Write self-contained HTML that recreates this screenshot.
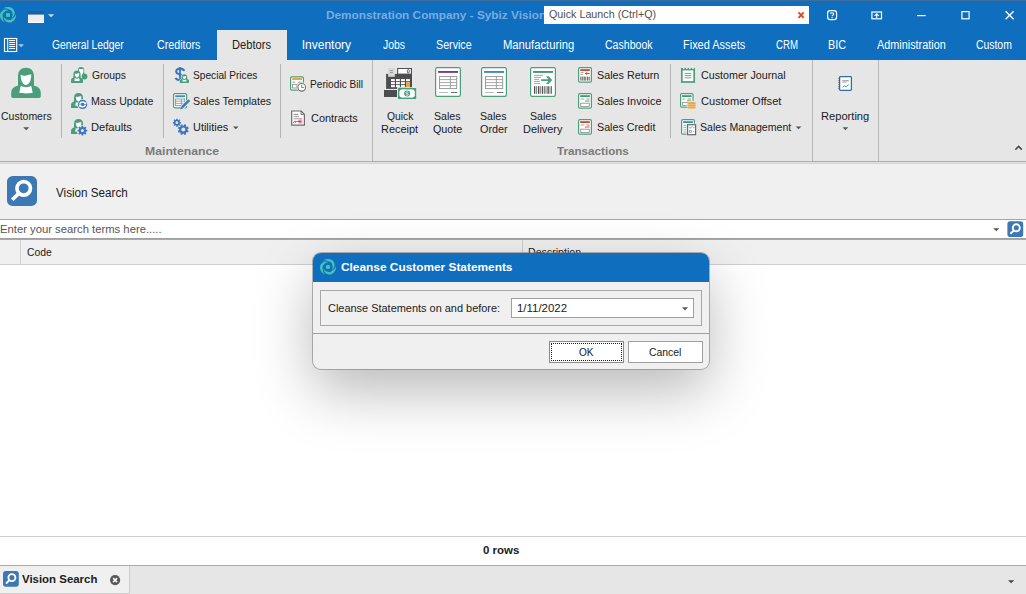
<!DOCTYPE html>
<html lang="en">
<head>
<meta charset="utf-8">
<title>Sybiz Vision - Cleanse Customer Statements</title>
<style>
html,body{margin:0;padding:0;}
body{width:1026px;height:594px;overflow:hidden;position:relative;background:#fff;font-family:"Liberation Sans",sans-serif;font-size:12px;}
.a{position:absolute;}
.t{position:absolute;white-space:nowrap;line-height:1;transform-origin:0 0;font-size:12px;}
svg{position:absolute;overflow:visible;}
.vs{position:absolute;width:1px;top:64px;height:74px;background:#b4b4b4;}
.gs{position:absolute;width:1px;top:60px;height:101px;background:#bababa;}
</style>
</head>
<body>
<!-- title bar + tab row -->
<div class="a" style="left:0;top:0;width:1026px;height:60px;background:#106ebe;"></div>
<div class="a" style="left:0;top:0;width:1026px;height:1px;background:#3d6d9c;"></div>
<!-- active tab -->
<div class="a" style="left:217px;top:30px;width:70px;height:30px;background:#e6e6e6;"></div>
<!-- ribbon -->
<div class="a" style="left:0;top:60px;width:1026px;height:101px;background:#e6e6e6;"></div>
<div class="a" style="left:0;top:161px;width:1026px;height:1px;background:#ababab;"></div>
<div class="a" style="left:0;top:162px;width:1026px;height:1px;background:#e2e2e2;"></div>
<div class="a" style="left:0;top:163px;width:1026px;height:1px;background:#d3d3d3;"></div>
<!-- content bg -->
<div class="a" style="left:0;top:164px;width:1026px;height:55px;background:#f0f0f0;"></div>
<!-- search input -->
<div class="a" style="left:0;top:219px;width:1026px;height:20px;background:#fff;border-top:1px solid #a6a6a6;border-bottom:1px solid #a0a0a0;box-sizing:border-box;"></div>
<div class="a" style="left:0;top:239px;width:1026px;height:1px;background:#a8a8a8;"></div>
<!-- grid header -->
<div class="a" style="left:0;top:240px;width:1026px;height:24px;background:#f0f0f0;"></div>
<div class="a" style="left:0;top:264px;width:1026px;height:1px;background:#cfcfcf;"></div>
<div class="a" style="left:20px;top:240px;width:1px;height:24px;background:#cfcfcf;"></div>
<div class="a" style="left:522px;top:240px;width:1px;height:24px;background:#cfcfcf;"></div>
<!-- footer -->
<div class="a" style="left:0;top:536px;width:1026px;height:1px;background:#cdcdcd;"></div>
<!-- bottom tab bar -->
<div class="a" style="left:0;top:565px;width:1026px;height:29px;background:#e6e6e6;"></div>
<div class="a" style="left:0;top:565px;width:1026px;height:1px;background:#ababab;"></div>
<div class="a" style="left:0;top:566px;width:129px;height:27px;background:#f0f0f0;border-right:1px solid #cecece;border-bottom:1px solid #cecece;"></div>

<!-- ribbon separators -->
<div class="vs" style="left:61px;"></div>
<div class="vs" style="left:163px;"></div>
<div class="vs" style="left:280px;"></div>
<div class="vs" style="left:670px;"></div>
<div class="gs" style="left:372px;"></div>
<div class="gs" style="left:812px;"></div>
<div class="gs" style="left:878px;"></div>

<span class="t" style="left:325.53px;top:9.99px;transform:scaleX(1.0735);color:#7AABE2;font-size:11px;font-weight:700;">Demonstration Company - Sybiz Vision</span>
<!-- quick launch -->
<div class="a" style="left:544px;top:6px;width:265px;height:18px;background:#fff;"></div>
<span class="t" style="left:548.90px;top:9.39px;transform:scaleX(0.9761);color:#505050;font-size:11px;">Quick Launch (Ctrl+Q)</span>
<span class="t" style="left:52.00px;top:39.44px;transform:scaleX(0.8601);color:#ffffff;">General Ledger</span>
<span class="t" style="left:157.00px;top:39.44px;transform:scaleX(0.8929);color:#ffffff;">Creditors</span>
<span class="t" style="left:231.57px;top:39.44px;transform:scaleX(0.9268);color:#202020;">Debtors</span>
<span class="t" style="left:301.75px;top:39.44px;transform:scaleX(1.0000);color:#ffffff;">Inventory</span>
<span class="t" style="left:383.10px;top:39.44px;transform:scaleX(0.8660);color:#ffffff;">Jobs</span>
<span class="t" style="left:435.86px;top:39.44px;transform:scaleX(0.8910);color:#ffffff;">Service</span>
<span class="t" style="left:502.81px;top:39.44px;transform:scaleX(0.9358);color:#ffffff;">Manufacturing</span>
<span class="t" style="left:604.50px;top:39.44px;transform:scaleX(0.8796);color:#ffffff;">Cashbook</span>
<span class="t" style="left:682.84px;top:39.44px;transform:scaleX(0.9142);color:#ffffff;">Fixed Assets</span>
<span class="t" style="left:776.25px;top:39.44px;transform:scaleX(0.8056);color:#ffffff;">CRM</span>
<span class="t" style="left:827.85px;top:39.44px;transform:scaleX(0.9028);color:#ffffff;">BIC</span>
<span class="t" style="left:876.80px;top:39.44px;transform:scaleX(0.9040);color:#ffffff;">Administration</span>
<span class="t" style="left:976.25px;top:39.44px;transform:scaleX(0.8659);color:#ffffff;">Custom</span>
<span class="t" style="left:0.75px;top:111.49px;transform:scaleX(0.9528);color:#202020;font-size:11px;">Customers</span>
<span class="t" style="left:91.75px;top:69.69px;transform:scaleX(0.9375);color:#202020;font-size:11px;">Groups</span>
<span class="t" style="left:90.79px;top:95.69px;transform:scaleX(0.9609);color:#202020;font-size:11px;">Mass Update</span>
<span class="t" style="left:90.74px;top:121.69px;transform:scaleX(1.0128);color:#202020;font-size:11px;">Defaults</span>
<span class="t" style="left:192.83px;top:69.69px;transform:scaleX(0.9239);color:#202020;font-size:11px;">Special Prices</span>
<span class="t" style="left:192.78px;top:95.69px;transform:scaleX(0.9715);color:#202020;font-size:11px;">Sales Templates</span>
<span class="t" style="left:192.76px;top:121.69px;transform:scaleX(0.9926);color:#202020;font-size:11px;">Utilities</span>
<span class="t" style="left:309.83px;top:78.69px;transform:scaleX(0.9241);color:#202020;font-size:11px;">Periodic Bill</span>
<span class="t" style="left:310.75px;top:112.69px;transform:scaleX(0.9947);color:#202020;font-size:11px;">Contracts</span>
<span class="t" style="left:386.50px;top:111.49px;transform:scaleX(0.9393);color:#202020;font-size:11px;">Quick</span>
<span class="t" style="left:381.01px;top:124.29px;transform:scaleX(0.9917);color:#202020;font-size:11px;">Receipt</span>
<span class="t" style="left:433.53px;top:111.49px;transform:scaleX(0.9654);color:#202020;font-size:11px;">Sales</span>
<span class="t" style="left:433.00px;top:124.29px;transform:scaleX(0.9767);color:#202020;font-size:11px;">Quote</span>
<span class="t" style="left:479.79px;top:111.49px;transform:scaleX(0.9615);color:#202020;font-size:11px;">Sales</span>
<span class="t" style="left:479.50px;top:124.29px;transform:scaleX(0.9821);color:#202020;font-size:11px;">Order</span>
<span class="t" style="left:529.79px;top:111.49px;transform:scaleX(0.9615);color:#202020;font-size:11px;">Sales</span>
<span class="t" style="left:522.76px;top:124.29px;transform:scaleX(0.9936);color:#202020;font-size:11px;">Delivery</span>
<span class="t" style="left:596.52px;top:69.69px;transform:scaleX(0.9798);color:#202020;font-size:11px;">Sales Return</span>
<span class="t" style="left:596.52px;top:95.69px;transform:scaleX(0.9844);color:#202020;font-size:11px;">Sales Invoice</span>
<span class="t" style="left:596.53px;top:121.69px;transform:scaleX(0.9746);color:#202020;font-size:11px;">Sales Credit</span>
<span class="t" style="left:700.75px;top:69.69px;transform:scaleX(0.9738);color:#202020;font-size:11px;">Customer Journal</span>
<span class="t" style="left:700.75px;top:95.69px;transform:scaleX(1.0063);color:#202020;font-size:11px;">Customer Offset</span>
<span class="t" style="left:699.79px;top:121.69px;transform:scaleX(0.9628);color:#202020;font-size:11px;">Sales Management</span>
<span class="t" style="left:820.74px;top:111.49px;transform:scaleX(1.0109);color:#202020;font-size:11px;">Reporting</span>
<span class="t" style="left:144.89px;top:145.69px;transform:scaleX(1.1115);color:#7a7a7a;font-size:11px;font-weight:700;">Maintenance</span>
<span class="t" style="left:557.00px;top:145.69px;transform:scaleX(1.0588);color:#7a7a7a;font-size:11px;font-weight:700;">Transactions</span>
<span class="t" style="left:55.50px;top:187.42px;transform:scaleX(0.9329);color:#202020;font-size:12.5px;">Vision Search</span>
<span class="t" style="left:-0.22px;top:223.69px;transform:scaleX(1.0244);color:#555555;font-size:11px;">Enter your search terms here.....</span>
<span class="t" style="left:26.75px;top:246.69px;transform:scaleX(0.9423);color:#202020;font-size:11px;">Code</span>
<span class="t" style="left:527.79px;top:246.69px;transform:scaleX(0.9639);color:#202020;font-size:11px;">Description</span>
<span class="t" style="left:482.50px;top:545.19px;transform:scaleX(1.0429);color:#202020;font-size:11px;font-weight:700;">0 rows</span>
<span class="t" style="left:21.80px;top:574.29px;transform:scaleX(1.0389);color:#202020;font-size:11px;font-weight:700;">Vision Search</span>

<svg style="left:0;top:0" width="1026" height="594" viewBox="0 0 1026 594"><path fill="#43c2b4" d="M3.04 8.66 L3.65 8.23 L4.29 7.86 L4.96 7.55 L5.66 7.30 L6.37 7.12 L7.10 7.00 L7.84 6.95 L8.58 6.97 L9.31 7.06 L10.04 7.21 L10.74 7.43 L11.43 7.72 L12.08 8.06 L12.68 8.50 L13.18 9.04 L13.61 9.63 L13.96 10.27 L14.23 10.92 L14.43 11.59 L14.55 12.26 L14.60 12.93 L14.57 13.59 L14.47 14.22 L14.31 14.82 L14.10 15.39 L13.82 15.92 L13.50 16.39 L13.14 16.82 L12.75 17.19 L12.33 17.50 L11.90 17.25 L12.11 16.90 L12.29 16.52 L12.44 16.12 L12.54 15.71 L12.60 15.29 L12.61 14.87 L12.59 14.45 L12.52 14.03 L12.40 13.62 L12.24 13.23 L12.13 12.81 L12.06 12.34 L11.92 11.88 L11.73 11.43 L11.48 11.00 L11.16 10.61 L10.76 10.30 L10.32 10.07 L9.86 9.88 L9.38 9.73 L8.89 9.62 L8.41 9.28 L7.88 8.97 L7.30 8.72 L6.66 8.53 L5.99 8.40 L5.29 8.35 L4.55 8.37 L3.80 8.47 L3.04 8.66Z"/><path fill="#43c2b4" d="M15.97 13.88 L16.04 14.62 L16.04 15.36 L15.98 16.09 L15.84 16.82 L15.64 17.53 L15.38 18.22 L15.05 18.89 L14.66 19.52 L14.22 20.11 L13.73 20.66 L13.18 21.16 L12.59 21.61 L11.97 22.00 L11.29 22.30 L10.57 22.47 L9.84 22.54 L9.12 22.53 L8.42 22.44 L7.74 22.27 L7.09 22.04 L6.49 21.75 L5.94 21.39 L5.44 21.00 L5.00 20.56 L4.61 20.08 L4.30 19.59 L4.04 19.07 L3.85 18.55 L3.73 18.02 L3.67 17.50 L4.10 17.25 L4.30 17.62 L4.54 17.96 L4.81 18.28 L5.11 18.57 L5.45 18.83 L5.80 19.06 L6.18 19.25 L6.58 19.40 L6.99 19.50 L7.41 19.56 L7.83 19.67 L8.27 19.84 L8.74 19.96 L9.23 20.01 L9.72 20.01 L10.22 19.93 L10.69 19.74 L11.11 19.48 L11.51 19.17 L11.88 18.83 L12.21 18.46 L12.75 18.22 L13.28 17.91 L13.79 17.53 L14.27 17.08 L14.72 16.56 L15.12 15.97 L15.46 15.33 L15.75 14.63 L15.97 13.88Z"/><path fill="#43c2b4" d="M4.98 22.46 L4.31 22.16 L3.67 21.79 L3.07 21.36 L2.50 20.88 L1.99 20.35 L1.52 19.78 L1.11 19.16 L0.76 18.51 L0.46 17.83 L0.24 17.13 L0.07 16.41 L-0.02 15.67 L-0.05 14.93 L0.03 14.20 L0.25 13.49 L0.55 12.83 L0.92 12.21 L1.35 11.64 L1.83 11.14 L2.36 10.70 L2.91 10.32 L3.49 10.02 L4.09 9.78 L4.69 9.62 L5.29 9.53 L5.88 9.50 L6.45 9.54 L7.00 9.64 L7.52 9.79 L8.00 10.00 L8.00 10.50 L7.58 10.49 L7.17 10.52 L6.75 10.60 L6.35 10.71 L5.96 10.87 L5.58 11.07 L5.23 11.30 L4.90 11.57 L4.61 11.88 L4.34 12.21 L4.04 12.52 L3.67 12.81 L3.34 13.16 L3.04 13.55 L2.80 13.99 L2.62 14.46 L2.55 14.96 L2.57 15.46 L2.63 15.95 L2.74 16.44 L2.90 16.92 L2.84 17.50 L2.84 18.12 L2.92 18.75 L3.07 19.39 L3.29 20.04 L3.60 20.68 L3.98 21.30 L4.44 21.90 L4.98 22.46Z"/><rect x="5.95" y="12.95" width="4.1" height="4.1" rx="1.3" fill="#43c2b4"/>
<rect x="28" y="11" width="16" height="12" fill="#ececec"/>
<rect x="28" y="11" width="16" height="3.6" fill="#1d5fa6"/>
<rect x="28" y="21.5" width="16" height="1.5" fill="#fafafa"/>
<path fill="#c6dbf0" d="M48 14.2H54.2L51.1 17.3Z"/>
<rect x="4.5" y="38.5" width="12.2" height="13" fill="none" stroke="#fff" stroke-width="1.15"/>
<rect x="7.2" y="38.5" width="1" height="13" fill="#fff"/>
<rect x="9.1" y="40.05" width="6" height="1" fill="#fff"/>
<rect x="9.1" y="42.05" width="6" height="1" fill="#fff"/>
<rect x="9.1" y="44.05" width="6" height="1" fill="#fff"/>
<rect x="9.1" y="46.05" width="6" height="1" fill="#fff"/>
<rect x="9.1" y="48.05" width="6" height="1" fill="#fff"/>
<path fill="#a8c8e8" d="M18.2 44.2H24L21.1 47.2Z"/>
<path d="M798.5 12.4L803.7 17.8M803.7 12.4L798.5 17.8" stroke="#e8410f" stroke-width="1.8" fill="none"/>
<rect x="827.6" y="10.7" width="9" height="9" rx="2.6" fill="none" stroke="#fff" stroke-width="1.2"/>
<path d="M830.5 13.8C830.5 12.3 833.8 12.3 833.8 14C833.8 15.1 832.1 15 832.1 16.3" stroke="#fff" stroke-width="1.1" fill="none"/><rect x="831.5" y="17.1" width="1.2" height="1.2" fill="#fff"/>
<rect x="871.9" y="12" width="9.6" height="6.8" fill="none" stroke="#fff" stroke-width="1.2"/>
<path d="M876.7 18V14.2M874.6 15.9L876.7 13.8L878.8 15.9" stroke="#fff" stroke-width="1.1" fill="none"/>
<rect x="917" y="15" width="8.6" height="1.2" fill="#fff"/>
<rect x="961.9" y="11.6" width="7.2" height="7.2" fill="none" stroke="#fff" stroke-width="1.2"/>
<path d="M1005.6 11.2L1013.6 19.2M1013.6 11.2L1005.6 19.2" stroke="#fff" stroke-width="1.4" fill="none"/>
<g transform="translate(10 67)"><path fill="#4a9f7a" d="M16 .8C11 .8 8 4.2 8 9.5V18.8C4 19.4 1.2 22 1.2 26V29C1.2 30.5 2 31 4 31H28C30 31 30.8 30.5 30.8 29V26C30.8 22 28 19.4 24 18.8V9.5C24 4.2 21 .8 16 .8Z"/><path fill="#fff" d="M10.6 7.8C12.6 9 15 9 17 8.2C19 7.5 20.5 7.3 21.3 7.6C21.3 13.5 19 18 16 18C13 18 10.6 13.5 10.6 7.8Z"/><path fill="#fff" d="M10.8 18.8C13 20.6 19 20.6 21.2 18.8L22.7 25.8C19 26.6 13 26.6 9.3 25.8Z"/></g>
<path fill="#555" d="M23.2 127.2H29.2L26.2 130.2Z"/>
<path fill="#4a9f7a" d="M78 74V69.6C78 67.7 79.3 67 81.05 67C82.8 67 84.1 67.7 84.1 69.6V74Z"/>
<path fill="#fff" d="M78.9 68.9H83.4V71.6C83.4 73.2 82.6 74.4 81.6 74.6L83 77.4H79V74.4C78.9 73.6 78.9 72 78.9 68.9Z"/>
<circle cx="84.5" cy="76.5" r="2.9" fill="#4a9f7a"/>
<path fill="#e6e6e6" d="M77 70.2C74.2 70.2 73 72 73 74.4V77C71.2 77.5 70.5 78.8 70.5 80.5V83H83.5V80.5C83.5 78.8 82.8 77.5 81 77V74.4C81 72 79.8 70.2 77 70.2Z" opacity=".0"/>
<g transform="translate(71 70.5) scale(1 0.96)"><path fill="#4a9f7a" d="M6 0C3.6 0 2.4 1.7 2.4 4V7.3C1 7.7 0 8.6 0 10.3V12.2C0 12.8 .3 13 1 13H11C11.7 13 12 12.8 12 12.2V10.3C12 8.6 11 7.7 9.6 7.3V4C9.6 1.7 8.4 0 6 0Z"/><path fill="#fff" d="M3.8 3.1C4.7 3.6 5.7 3.5 6.6 3.1C7.4 2.8 7.9 2.8 8.3 3C8.3 5.4 7.4 7.2 6 7.2C4.6 7.2 3.8 5.4 3.8 3.1Z"/><path fill="#fff" d="M3.9 7.9C5 8.7 7 8.7 8.1 7.9L8.7 10.8C7.4 11.1 4.6 11.1 3.3 10.8Z"/></g>
<g transform="translate(71 93) scale(1.25 1.16)"><path fill="#4a9f7a" d="M6 0C3.6 0 2.4 1.7 2.4 4V7.3C1 7.7 0 8.6 0 10.3V12.2C0 12.8 .3 13 1 13H11C11.7 13 12 12.8 12 12.2V10.3C12 8.6 11 7.7 9.6 7.3V4C9.6 1.7 8.4 0 6 0Z"/><path fill="#fff" d="M3.8 3.1C4.7 3.6 5.7 3.5 6.6 3.1C7.4 2.8 7.9 2.8 8.3 3C8.3 5.4 7.4 7.2 6 7.2C4.6 7.2 3.8 5.4 3.8 3.1Z"/><path fill="#fff" d="M3.9 7.9C5 8.7 7 8.7 8.1 7.9L8.7 10.8C7.4 11.1 4.6 11.1 3.3 10.8Z"/></g>
<circle cx="82.6" cy="104.4" r="5.4" fill="#e6e6e6"/><circle cx="82.6" cy="104.4" r="4.6" fill="#3a77be"/>
<path d="M79.7 103.8C80.5 101.6 84 101.4 85.2 103.3M85.5 105C84.7 107.2 81.2 107.4 80 105.5" stroke="#fff" stroke-width="1.5" fill="none"/><path fill="#fff" d="M86.3 101.6V104.3H83.6ZM78.9 107.2V104.5H81.6Z"/>
<g transform="translate(71 119) scale(1.25 1.16)"><path fill="#4a9f7a" d="M6 0C3.6 0 2.4 1.7 2.4 4V7.3C1 7.7 0 8.6 0 10.3V12.2C0 12.8 .3 13 1 13H11C11.7 13 12 12.8 12 12.2V10.3C12 8.6 11 7.7 9.6 7.3V4C9.6 1.7 8.4 0 6 0Z"/><path fill="#fff" d="M3.8 3.1C4.7 3.6 5.7 3.5 6.6 3.1C7.4 2.8 7.9 2.8 8.3 3C8.3 5.4 7.4 7.2 6 7.2C4.6 7.2 3.8 5.4 3.8 3.1Z"/><path fill="#fff" d="M3.9 7.9C5 8.7 7 8.7 8.1 7.9L8.7 10.8C7.4 11.1 4.6 11.1 3.3 10.8Z"/></g>
<circle cx="82.4" cy="130.6" r="5.7" fill="#e6e6e6"/>
<path fill="#3a77be" fill-rule="evenodd" d="M85.99 129.71 L87.22 129.72 L87.22 131.48 L85.99 131.49 L85.57 132.51 L86.43 133.39 L85.19 134.63 L84.31 133.77 L83.29 134.19 L83.28 135.42 L81.52 135.42 L81.51 134.19 L80.49 133.77 L79.61 134.63 L78.37 133.39 L79.23 132.51 L78.81 131.49 L77.58 131.48 L77.58 129.72 L78.81 129.71 L79.23 128.69 L78.37 127.81 L79.61 126.57 L80.49 127.43 L81.51 127.01 L81.52 125.78 L83.28 125.78 L83.29 127.01 L84.31 127.43 L85.19 126.57 L86.43 127.81 L85.57 128.69Z M80.80 130.60 a1.6 1.6 0 1 0 3.2 0 a1.6 1.6 0 1 0 -3.2 0Z"/>
<path d="M184.3 70.9C183.2 68.2 176.2 67.4 176.2 71.4C176.2 75.2 183.8 74 183.8 77.6C183.8 81 177 80.6 175.4 78" stroke="#3a77be" stroke-width="2.1" fill="none"/>
<rect x="179.1" y="67" width="1.8" height="14" fill="#3a77be"/>
<path fill="#e6e6e6" stroke="#e6e6e6" stroke-width="1.6" d="M184.4 74.2C182.6 74.2 181.8 75.4 181.8 77V79.2C180.6 79.5 179.8 80.2 179.8 81.4V82.9H189V81.4C189 80.2 188.2 79.5 187 79.2V77C187 75.4 186.2 74.2 184.4 74.2Z"/>
<g transform="translate(179.8 74.2) scale(0.77 0.67)"><path fill="#4a9f7a" d="M6 0C3.6 0 2.4 1.7 2.4 4V7.3C1 7.7 0 8.6 0 10.3V12.2C0 12.8 .3 13 1 13H11C11.7 13 12 12.8 12 12.2V10.3C12 8.6 11 7.7 9.6 7.3V4C9.6 1.7 8.4 0 6 0Z"/><path fill="#fff" d="M3.8 3.1C4.7 3.6 5.7 3.5 6.6 3.1C7.4 2.8 7.9 2.8 8.3 3C8.3 5.4 7.4 7.2 6 7.2C4.6 7.2 3.8 5.4 3.8 3.1Z"/><path fill="#fff" d="M3.9 7.9C5 8.7 7 8.7 8.1 7.9L8.7 10.8C7.4 11.1 4.6 11.1 3.3 10.8Z"/></g>
<rect x="173.60" y="93.60" width="13.00" height="14.20" rx="1.2" fill="#fff" stroke="#4a9f7a" stroke-width="1.2"/>
<rect x="175.2" y="95.3" width="9.8" height="1.9" fill="#3a8fb7"/>
<rect x="175.6" y="99" width="9" height="6.6" fill="none" stroke="#929292" stroke-width=".9"/>
<path d="M175.6 101.2L184.6 101.2" stroke="#929292" stroke-width="0.8" fill="none"/>
<path d="M175.6 103.4L184.6 103.4" stroke="#929292" stroke-width="0.8" fill="none"/>
<path d="M181.4 99L181.4 105.6" stroke="#929292" stroke-width="0.8" fill="none"/>
<path d="M189.6 100.2L181.2 108.4" stroke="#e6e6e6" stroke-width="4.2" fill="none"/>
<path d="M189.3 100.2L182 107.4" stroke="#3a77be" stroke-width="2.5" fill="none"/><path fill="#3a77be" d="M180.2 109.3L180.9 106.4L183 108.5Z"/>
<path fill="#3a77be" fill-rule="evenodd" d="M179.91 121.95 L180.93 121.96 L180.93 123.44 L179.91 123.45 L179.56 124.30 L180.27 125.03 L179.23 126.07 L178.50 125.36 L177.65 125.71 L177.64 126.73 L176.16 126.73 L176.15 125.71 L175.30 125.36 L174.57 126.07 L173.53 125.03 L174.24 124.30 L173.89 123.45 L172.87 123.44 L172.87 121.96 L173.89 121.95 L174.24 121.10 L173.53 120.37 L174.57 119.33 L175.30 120.04 L176.15 119.69 L176.16 118.67 L177.64 118.67 L177.65 119.69 L178.50 120.04 L179.23 119.33 L180.27 120.37 L179.56 121.10Z M175.50 122.70 a1.4 1.4 0 1 0 2.8 0 a1.4 1.4 0 1 0 -2.8 0Z"/>
<path fill="#3a77be" fill-rule="evenodd" d="M187.50 130.22 L188.78 130.76 L188.01 132.62 L186.73 132.12 L185.83 133.01 L186.35 134.30 L184.49 135.07 L183.94 133.80 L182.68 133.80 L182.14 135.08 L180.28 134.31 L180.78 133.03 L179.89 132.13 L178.60 132.65 L177.83 130.79 L179.10 130.24 L179.10 128.98 L177.82 128.44 L178.59 126.58 L179.87 127.08 L180.77 126.19 L180.25 124.90 L182.11 124.13 L182.66 125.40 L183.92 125.40 L184.46 124.12 L186.32 124.89 L185.82 126.17 L186.71 127.07 L188.00 126.55 L188.77 128.41 L187.50 128.96Z M181.30 129.60 a2.0 2.0 0 1 0 4.0 0 a2.0 2.0 0 1 0 -4.0 0Z"/>
<path fill="#555" d="M233 126.4H238.6L235.8 129.2Z"/>
<rect x="290.60" y="76.80" width="12.80" height="13.40" rx="1.2" fill="#fff" stroke="#4a9f7a" stroke-width="1.2"/>
<rect x="292.2" y="78" width="9.8" height="2" fill="#e8a646"/>
<path d="M292.4 82.2L295.4 82.2" stroke="#929292" stroke-width="0.9" fill="none"/>
<path d="M298 82.2L301.6 82.2" stroke="#777" stroke-width="0.9" fill="none"/>
<rect x="292.5" y="84.6" width="4.4" height="3.4" fill="none" stroke="#929292" stroke-width=".9"/>
<rect x="296.8" y="83.6" width="1.4" height="1.2" fill="#e8a646"/>
<circle cx="301.7" cy="87.3" r="5" fill="#e6e6e6"/><circle cx="301.7" cy="87.3" r="3.8" fill="#fff" stroke="#707070" stroke-width="1.1"/><path d="M301.7 84.9V87.5H303.8" stroke="#707070" stroke-width=".9" fill="none"/>
<path d="M291.7 111H301L304.4 114.4V125.2H291.7Z" fill="#fff" stroke="#6a6a6a" stroke-width="1.2" stroke-linejoin="round"/><path d="M301 111V114.4H304.4" fill="none" stroke="#6a6a6a" stroke-width=".9"/>
<path d="M293.6 114.4L298.4 114.4" stroke="#777" stroke-width="0.9" fill="none"/>
<path d="M293.6 116.6L299 116.6" stroke="#929292" stroke-width="0.9" fill="none"/>
<path d="M293.6 118.8L302.4 118.8" stroke="#929292" stroke-width="0.9" fill="none"/>
<circle cx="300.3" cy="121.5" r="2.5" fill="#f3a8bd" opacity=".85"/><circle cx="300.3" cy="121.5" r="1.2" fill="#e0557f" opacity=".7"/>
<path d="M293.4 122.8C294.6 120.4 296 120.6 295.4 122.4C296.6 121 298 121.4 300.6 121.6" stroke="#41558f" stroke-width=".9" fill="none"/>
<rect x="386.1" y="73.9" width="25.9" height="15" fill="#4d4d4f"/>
<rect x="397.1" y="68" width="14.9" height="6.4" fill="#4d4d4f"/>
<rect x="398.2" y="69" width="12.7" height="4.6" fill="#fff"/>
<rect x="407.3" y="69.7" width="2" height="3.2" rx=".9" fill="none" stroke="#3a3f55" stroke-width=".8"/>
<rect x="388.1" y="67.8" width="6.8" height="9" fill="#d9d9d9"/>
<path d="M389.8 70.6L393 70.6" stroke="#8a8a8a" stroke-width="0.8" fill="none"/>
<path d="M389.8 72.6L393 72.6" stroke="#8a8a8a" stroke-width="0.8" fill="none"/>
<rect x="391" y="79.1" width="3.9" height="2.1" fill="#fff"/>
<rect x="391" y="82.1" width="3.9" height="2.1" fill="#fff"/>
<rect x="391" y="85.1" width="3.9" height="2.1" fill="#fff"/>
<rect x="396" y="79.1" width="3.9" height="2.1" fill="#fff"/>
<rect x="396" y="82.1" width="3.9" height="2.1" fill="#fff"/>
<rect x="396" y="85.1" width="3.9" height="2.1" fill="#fff"/>
<rect x="401" y="79.1" width="3.9" height="2.1" fill="#fff"/>
<rect x="401" y="82.1" width="3.9" height="2.1" fill="#fff"/>
<rect x="401" y="85.1" width="3.9" height="2.1" fill="#fff"/>
<rect x="406" y="79.1" width="3.9" height="2.1" fill="#fff"/>
<rect x="406" y="82.1" width="3.9" height="2.1" fill="#fff"/>
<rect x="406" y="85.1" width="3.9" height="2.1" fill="#fff"/>
<rect x="406" y="82.1" width="3.9" height="6.7" fill="#e8a646"/>
<rect x="384" y="90" width="13" height="7" fill="#4d4d4f"/>
<rect x="397" y="87.2" width="20" height="12.4" fill="#e6e6e6"/>
<rect x="398.7" y="88.7" width="16.8" height="9.6" fill="#fff" stroke="#4a9f7a" stroke-width="1.4"/>
<path fill="#4a9f7a" d="M399 89H401.4L399 91.4ZM415.2 89V91.4L412.8 89ZM399 98V95.6L401.4 98ZM415.2 98H412.8L415.2 95.6Z"/>
<circle cx="407.1" cy="93.5" r="3" fill="#4a9f7a"/><path d="M408.3 92.4C407.8 91.5 405.9 91.7 405.9 92.7C405.9 93.8 408.3 93.3 408.3 94.5C408.3 95.5 406.3 95.5 405.8 94.6" stroke="#fff" stroke-width=".8" fill="none"/>
<rect x="435.60" y="67.60" width="24.80" height="28.80" rx="1.6" fill="#fff" stroke="#4a9f7a" stroke-width="1.2"/>
<rect x="438.1" y="71" width="19.9" height="1.9" fill="#7b3a96"/>
<rect x="439.5" y="76.6" width="17.2" height="12" fill="none" stroke="#929292" stroke-width=".9"/>
<path d="M439.5 79.6L456.7 79.6" stroke="#929292" stroke-width="0.8" fill="none"/>
<path d="M439.5 82.6L456.7 82.6" stroke="#929292" stroke-width="0.8" fill="none"/>
<path d="M439.5 85.6L456.7 85.6" stroke="#929292" stroke-width="0.8" fill="none"/>
<path d="M450.4 76.6L450.4 88.6" stroke="#929292" stroke-width="0.8" fill="none"/>
<path d="M439.2 92.5L448 92.5" stroke="#b4b4b4" stroke-width="0.9" fill="none"/>
<path d="M451 92.5L457.4 92.5" stroke="#707070" stroke-width="1" fill="none"/>
<rect x="481.60" y="67.60" width="24.80" height="28.80" rx="1.6" fill="#fff" stroke="#4a9f7a" stroke-width="1.2"/>
<rect x="484.1" y="71" width="19.9" height="1.9" fill="#3a8fb7"/>
<rect x="485.5" y="76.6" width="17.2" height="12" fill="none" stroke="#929292" stroke-width=".9"/>
<path d="M485.5 79.6L502.7 79.6" stroke="#929292" stroke-width="0.8" fill="none"/>
<path d="M485.5 82.6L502.7 82.6" stroke="#929292" stroke-width="0.8" fill="none"/>
<path d="M485.5 85.6L502.7 85.6" stroke="#929292" stroke-width="0.8" fill="none"/>
<path d="M496.4 76.6L496.4 88.6" stroke="#929292" stroke-width="0.8" fill="none"/>
<path d="M485.2 92.5L494 92.5" stroke="#b4b4b4" stroke-width="0.9" fill="none"/>
<path d="M497 92.5L503.4 92.5" stroke="#707070" stroke-width="1" fill="none"/>
<rect x="530.60" y="67.60" width="24.80" height="28.80" rx="1.6" fill="#fff" stroke="#4a9f7a" stroke-width="1.2"/>
<rect x="533.1" y="71" width="19.9" height="1.9" fill="#3f9a6e"/>
<path d="M534 75.4L543 75.4" stroke="#929292" stroke-width="0.8" fill="none"/>
<path d="M534 77.4L541 77.4" stroke="#929292" stroke-width="0.8" fill="none"/>
<path d="M534 79.4L539 79.4" stroke="#929292" stroke-width="0.8" fill="none"/>
<path d="M534 81.4L540 81.4" stroke="#929292" stroke-width="0.8" fill="none"/>
<path d="M534 83.4L540 83.4" stroke="#929292" stroke-width="0.8" fill="none"/>
<path fill="#4a9f7a" d="M541.2 79.2H548.4L546 76.2H548.6L552.2 80.1L548.6 84H546L548.4 81H541.2Z"/>
<rect x="534" y="86.2" width="1.3" height="7.6" fill="#505050"/>
<rect x="536.3" y="86.2" width="0.8" height="7.6" fill="#505050"/>
<rect x="538" y="86.2" width="1.4" height="7.6" fill="#505050"/>
<rect x="540.4" y="86.2" width="0.8" height="7.6" fill="#505050"/>
<rect x="542" y="86.2" width="1.2" height="7.6" fill="#505050"/>
<rect x="544" y="86.2" width="0.7" height="7.6" fill="#505050"/>
<rect x="545.6" y="86.2" width="0.8" height="7.6" fill="#505050"/>
<rect x="547.4" y="86.2" width="1.4" height="7.6" fill="#505050"/>
<rect x="549.6" y="86.2" width="0.8" height="7.6" fill="#505050"/>
<rect x="551.2" y="86.2" width="0.8" height="7.6" fill="#505050"/>
<rect x="578.60" y="67.60" width="12.80" height="14.60" rx="1.2" fill="#fff" stroke="#4a9f7a" stroke-width="1.2"/>
<rect x="580.2" y="69.2" width="9.6" height="1.8" fill="#d0432e"/>
<path d="M580.4 72.6L583.6 72.6" stroke="#929292" stroke-width="0.8" fill="none"/>
<path d="M580.4 74.4L583.2 74.4" stroke="#929292" stroke-width="0.8" fill="none"/>
<path fill="#d0432e" d="M589.6 73H586.8V72L584.6 73.5L586.8 75V74H589.6Z"/>
<rect x="580.4" y="76.6" width="1" height="4" fill="#505050"/>
<rect x="582.2" y="76.6" width="0.7" height="4" fill="#505050"/>
<rect x="583.6" y="76.6" width="1.1" height="4" fill="#505050"/>
<rect x="585.4" y="76.6" width="0.7" height="4" fill="#505050"/>
<rect x="586.8" y="76.6" width="1" height="4" fill="#505050"/>
<rect x="588.6" y="76.6" width="1" height="4" fill="#505050"/>
<rect x="578.60" y="93.60" width="12.80" height="14.60" rx="1.2" fill="#fff" stroke="#4a9f7a" stroke-width="1.2"/>
<rect x="580.2" y="95.2" width="9.6" height="1.8" fill="#3f9a6e"/>
<path d="M580.4 99L584.4 99" stroke="#929292" stroke-width="0.8" fill="none"/>
<path d="M586.4 99L589.6 99" stroke="#777" stroke-width="0.8" fill="none"/>
<path d="M585 101L589.6 101" stroke="#3f9a6e" stroke-width="0.9" fill="none"/>
<rect x="580.7" y="103.2" width="8.6" height="3.2" fill="none" stroke="#929292" stroke-width=".9"/>
<rect x="578.60" y="119.60" width="12.80" height="14.60" rx="1.2" fill="#fff" stroke="#4a9f7a" stroke-width="1.2"/>
<rect x="580.2" y="121.2" width="9.6" height="1.8" fill="#d0432e"/>
<path d="M580.4 125L584.4 125" stroke="#929292" stroke-width="0.8" fill="none"/>
<path d="M586.4 125L589.6 125" stroke="#777" stroke-width="0.8" fill="none"/>
<path d="M585 127L589.6 127" stroke="#d0432e" stroke-width="0.9" fill="none"/>
<rect x="580.7" y="129.2" width="8.6" height="3.2" fill="none" stroke="#929292" stroke-width=".9"/>
<rect x="681.8" y="69.4" width="12.4" height="12.6" fill="#fff" stroke="#4a9f7a" stroke-width="1.7"/>
<rect x="681" y="67.9" width="14" height="2.3" fill="#4a9f7a"/>
<path fill="#fff" d="M682.9 67.4H684.4V68.6C684.4 69.6 682.9 69.6 682.9 68.6Z"/>
<path fill="#fff" d="M686 67.4H687.5V68.6C687.5 69.6 686 69.6 686 68.6Z"/>
<path fill="#fff" d="M689.1 67.4H690.6V68.6C690.6 69.6 689.1 69.6 689.1 68.6Z"/>
<path fill="#fff" d="M692.2 67.4H693.7V68.6C693.7 69.6 692.2 69.6 692.2 68.6Z"/>
<path d="M684.6 73.4L691.4 73.4" stroke="#909090" stroke-width="1" fill="none"/>
<path d="M684.6 75.6L691.4 75.6" stroke="#909090" stroke-width="1" fill="none"/>
<path d="M684.6 77.8L691.4 77.8" stroke="#909090" stroke-width="1" fill="none"/>
<rect x="680.60" y="93.60" width="12.40" height="13.60" rx="1.2" fill="#fff" stroke="#4a9f7a" stroke-width="1.2"/>
<rect x="682.1" y="95.2" width="9.4" height="1.8" fill="#3f9a6e"/>
<path d="M682.3 99L685.6 99" stroke="#929292" stroke-width="0.8" fill="none"/>
<path d="M687.4 99L691 99" stroke="#777" stroke-width="0.8" fill="none"/>
<path d="M687 100.8L691 100.8" stroke="#3f9a6e" stroke-width="0.9" fill="none"/>
<rect x="682.6" y="102.4" width="5" height="3" fill="none" stroke="#929292" stroke-width=".9"/>
<ellipse cx="691.6" cy="105" rx="5.2" ry="4.4" fill="#e6e6e6"/>
<ellipse cx="691.6" cy="107.2" rx="4.3" ry="1.5" fill="#e8a646" stroke="#f4d6a2" stroke-width=".5"/>
<ellipse cx="691.6" cy="105.2" rx="4.3" ry="1.5" fill="#e8a646" stroke="#f4d6a2" stroke-width=".5"/>
<ellipse cx="691.6" cy="103.2" rx="4.3" ry="1.5" fill="#e8a646" stroke="#f4d6a2" stroke-width=".5"/>
<rect x="681.60" y="119.60" width="12.80" height="14.60" rx="1.2" fill="#fff" stroke="#4a9f7a" stroke-width="1.2"/>
<rect x="683.1" y="121.2" width="9.8" height="1.9" fill="#3a8fb7"/>
<path d="M683.4 125.4L686.4 125.4" stroke="#929292" stroke-width="0.8" fill="none"/>
<path d="M683.4 127.6L686.4 127.6" stroke="#929292" stroke-width="0.8" fill="none"/>
<path d="M683.4 129.8L686.4 129.8" stroke="#929292" stroke-width="0.8" fill="none"/>
<path d="M683.4 132L686.4 132" stroke="#929292" stroke-width="0.8" fill="none"/>
<rect x="686.4" y="123.6" width="10.2" height="12" fill="#e6e6e6"/>
<rect x="687.6" y="124.7" width="8" height="10" fill="#fff" stroke="#6a6a6a" stroke-width="1.2"/>
<path d="M689.4 127.2L690.4 128.3L692.2 126.2" stroke="#4a9f7a" stroke-width=".9" fill="none"/>
<rect x="689.4" y="130.4" width="2.2" height="2.2" fill="none" stroke="#929292" stroke-width=".7"/>
<rect x="693.4" y="127" width="1" height="1" fill="#888"/>
<rect x="693.4" y="131" width="1" height="1" fill="#888"/>
<path fill="#555" d="M795.8 126.4H801.4L798.5999999999999 129.2Z"/>
<rect x="839.6" y="76.6" width="11.8" height="13.8" rx=".8" fill="#fff" stroke="#2f6db5" stroke-width="1.3"/>
<circle cx="839.2" cy="78.6" r=".8" fill="#5a5a5a"/>
<circle cx="839.2" cy="80.6" r=".8" fill="#5a5a5a"/>
<circle cx="839.2" cy="82.6" r=".8" fill="#5a5a5a"/>
<circle cx="839.2" cy="84.6" r=".8" fill="#5a5a5a"/>
<circle cx="839.2" cy="86.6" r=".8" fill="#5a5a5a"/>
<circle cx="839.2" cy="88.4" r=".8" fill="#5a5a5a"/>
<rect x="842.2" y="80.2" width="6.6" height="1.2" fill="#9a9a9a"/>
<rect x="842.2" y="81.8" width="4.4" height="0.9" fill="#b0b0b0"/>
<path d="M842.8 87.4L844.4 85.8L846.4 86.8L848.8 84.4" stroke="#3f9a6e" stroke-width="1" fill="none"/>
<path fill="#555" d="M842.6 127.2H848.2L845.4000000000001 130.2Z"/>
<path d="M1015.4 149.6L1018.6 146.4L1021.8 149.6" stroke="#444" stroke-width="1.5" fill="none"/>
<rect x="7" y="176" width="30" height="30" rx="5.6" fill="#3b78b4"/>
<circle cx="23.7" cy="188.3" r="6.75" fill="none" stroke="#fff" stroke-width="3.7"/><path d="M18.6 193.6L12.2 199.8" stroke="#fff" stroke-width="3.6" fill="none"/>
<path fill="#555" d="M993.2 228.2H999.4L996.3 231.2Z"/>
<rect x="1007.4" y="221.2" width="15.8" height="15.8" rx="2.8" fill="#3b78b4"/>
<circle cx="1016.3" cy="227.8" r="3.5" fill="none" stroke="#fff" stroke-width="1.9"/><path d="M1013.6 230.6L1010.4 233.8" stroke="#fff" stroke-width="2" fill="none"/>
<rect x="3" y="571" width="15.8" height="15.8" rx="2.8" fill="#3b78b4"/>
<circle cx="11.9" cy="577.6" r="3.5" fill="none" stroke="#fff" stroke-width="1.9"/><path d="M9.2 580.4L6 583.6" stroke="#fff" stroke-width="2" fill="none"/>
<circle cx="115.1" cy="580.1" r="5.1" fill="#585858"/><path d="M113.1 578.1L117.1 582.1M117.1 578.1L113.1 582.1" stroke="#fff" stroke-width="1.5" fill="none"/>
<path fill="#444" d="M1008 580.2H1014.2L1011.1 583.2Z"/></svg>

<!-- dialog -->
<div class="a" id="dlg" style="left:313px;top:253px;width:396px;height:116px;background:#f0f0f0;border-radius:8px;box-shadow:0 0 0 1px rgba(110,110,110,.5),0 22px 58px 0 rgba(0,0,0,.28);overflow:hidden;">
  <div class="a" style="left:0;top:0;width:396px;height:29px;background:#106ebe;"></div>
  <div class="a" style="left:7px;top:37px;width:382px;height:36px;border:1px solid #a8a8a8;box-sizing:border-box;"></div>
  <div class="a" style="left:198px;top:45px;width:183px;height:20px;border:1px solid #a0a0a0;background:#fff;box-sizing:border-box;"></div>
  <div class="a" style="left:0;top:80px;width:396px;height:1px;background:#a0a0a0;"></div>
  <div class="a" style="left:236px;top:88px;width:75px;height:22px;border:1px solid #8a8a8a;background:#fff;box-sizing:border-box;"></div>
  <div class="a" style="left:238px;top:90px;width:71px;height:18px;border:1px dotted #222;box-sizing:border-box;"></div>
  <div class="a" style="left:315px;top:88px;width:75px;height:22px;border:1px solid #a0a0a0;background:#fff;box-sizing:border-box;"></div>
</div>
<span class="t" style="left:341.30px;top:262.37px;transform:scaleX(1.0319);color:#ffffff;font-size:11.5px;font-weight:700;">Cleanse Customer Statements</span>
<span class="t" style="left:327.50px;top:303.27px;transform:scaleX(0.9514);color:#202020;font-size:11.5px;">Cleanse Statements on and before:</span>
<span class="t" style="left:516.90px;top:303.47px;transform:scaleX(0.9959);color:#202020;font-size:11.5px;">1/11/2022</span>
<span class="t" style="left:578.60px;top:347.27px;transform:scaleX(0.8750);color:#202020;font-size:11.5px;">OK</span>
<span class="t" style="left:648.50px;top:347.27px;transform:scaleX(0.9057);color:#202020;font-size:11.5px;">Cancel</span>
<svg style="left:0;top:0" width="1026" height="594" viewBox="0 0 1026 594"><path fill="#43c2b4" d="M323.04 260.66 L323.65 260.23 L324.29 259.86 L324.96 259.55 L325.66 259.30 L326.37 259.12 L327.10 259.00 L327.84 258.95 L328.58 258.97 L329.31 259.06 L330.04 259.21 L330.74 259.43 L331.43 259.72 L332.08 260.06 L332.68 260.50 L333.18 261.04 L333.61 261.63 L333.96 262.27 L334.23 262.92 L334.43 263.59 L334.55 264.26 L334.60 264.93 L334.57 265.59 L334.47 266.22 L334.31 266.82 L334.10 267.39 L333.82 267.92 L333.50 268.39 L333.14 268.82 L332.75 269.19 L332.33 269.50 L331.90 269.25 L332.11 268.90 L332.29 268.52 L332.44 268.12 L332.54 267.71 L332.60 267.29 L332.61 266.87 L332.59 266.45 L332.52 266.03 L332.40 265.62 L332.24 265.23 L332.13 264.81 L332.06 264.34 L331.92 263.88 L331.73 263.43 L331.48 263.00 L331.16 262.61 L330.76 262.30 L330.32 262.07 L329.86 261.88 L329.38 261.73 L328.89 261.62 L328.41 261.28 L327.88 260.97 L327.30 260.72 L326.66 260.53 L325.99 260.40 L325.29 260.35 L324.55 260.37 L323.80 260.47 L323.04 260.66Z"/><path fill="#43c2b4" d="M335.97 265.88 L336.04 266.62 L336.04 267.36 L335.98 268.09 L335.84 268.82 L335.64 269.53 L335.38 270.22 L335.05 270.89 L334.66 271.52 L334.22 272.11 L333.73 272.66 L333.18 273.16 L332.59 273.61 L331.97 274.00 L331.29 274.30 L330.57 274.47 L329.84 274.54 L329.12 274.53 L328.42 274.44 L327.74 274.27 L327.09 274.04 L326.49 273.75 L325.94 273.39 L325.44 273.00 L325.00 272.56 L324.61 272.08 L324.30 271.59 L324.04 271.07 L323.85 270.55 L323.73 270.02 L323.67 269.50 L324.10 269.25 L324.30 269.62 L324.54 269.96 L324.81 270.28 L325.11 270.57 L325.45 270.83 L325.80 271.06 L326.18 271.25 L326.58 271.40 L326.99 271.50 L327.41 271.56 L327.83 271.67 L328.27 271.84 L328.74 271.96 L329.23 272.01 L329.72 272.01 L330.22 271.93 L330.69 271.74 L331.11 271.48 L331.51 271.17 L331.88 270.83 L332.21 270.46 L332.75 270.22 L333.28 269.91 L333.79 269.53 L334.27 269.08 L334.72 268.56 L335.12 267.97 L335.46 267.33 L335.75 266.63 L335.97 265.88Z"/><path fill="#43c2b4" d="M324.98 274.46 L324.31 274.16 L323.67 273.79 L323.07 273.36 L322.50 272.88 L321.99 272.35 L321.52 271.78 L321.11 271.16 L320.76 270.51 L320.46 269.83 L320.24 269.13 L320.07 268.41 L319.98 267.67 L319.95 266.93 L320.03 266.20 L320.25 265.49 L320.55 264.83 L320.92 264.21 L321.35 263.64 L321.83 263.14 L322.36 262.70 L322.91 262.32 L323.49 262.02 L324.09 261.78 L324.69 261.62 L325.29 261.53 L325.88 261.50 L326.45 261.54 L327.00 261.64 L327.52 261.79 L328.00 262.00 L328.00 262.50 L327.58 262.49 L327.17 262.52 L326.75 262.60 L326.35 262.71 L325.96 262.87 L325.58 263.07 L325.23 263.30 L324.90 263.57 L324.61 263.88 L324.34 264.21 L324.04 264.52 L323.67 264.81 L323.34 265.16 L323.04 265.55 L322.80 265.99 L322.62 266.46 L322.55 266.96 L322.57 267.46 L322.63 267.95 L322.74 268.44 L322.90 268.92 L322.84 269.50 L322.84 270.12 L322.92 270.75 L323.07 271.39 L323.29 272.04 L323.60 272.68 L323.98 273.30 L324.44 273.90 L324.98 274.46Z"/><rect x="325.95" y="264.95" width="4.1" height="4.1" rx="1.3" fill="#43c2b4"/>
<path fill="#555" d="M682 307.2H688L685.0 310.4Z"/></svg>
</body>
</html>
